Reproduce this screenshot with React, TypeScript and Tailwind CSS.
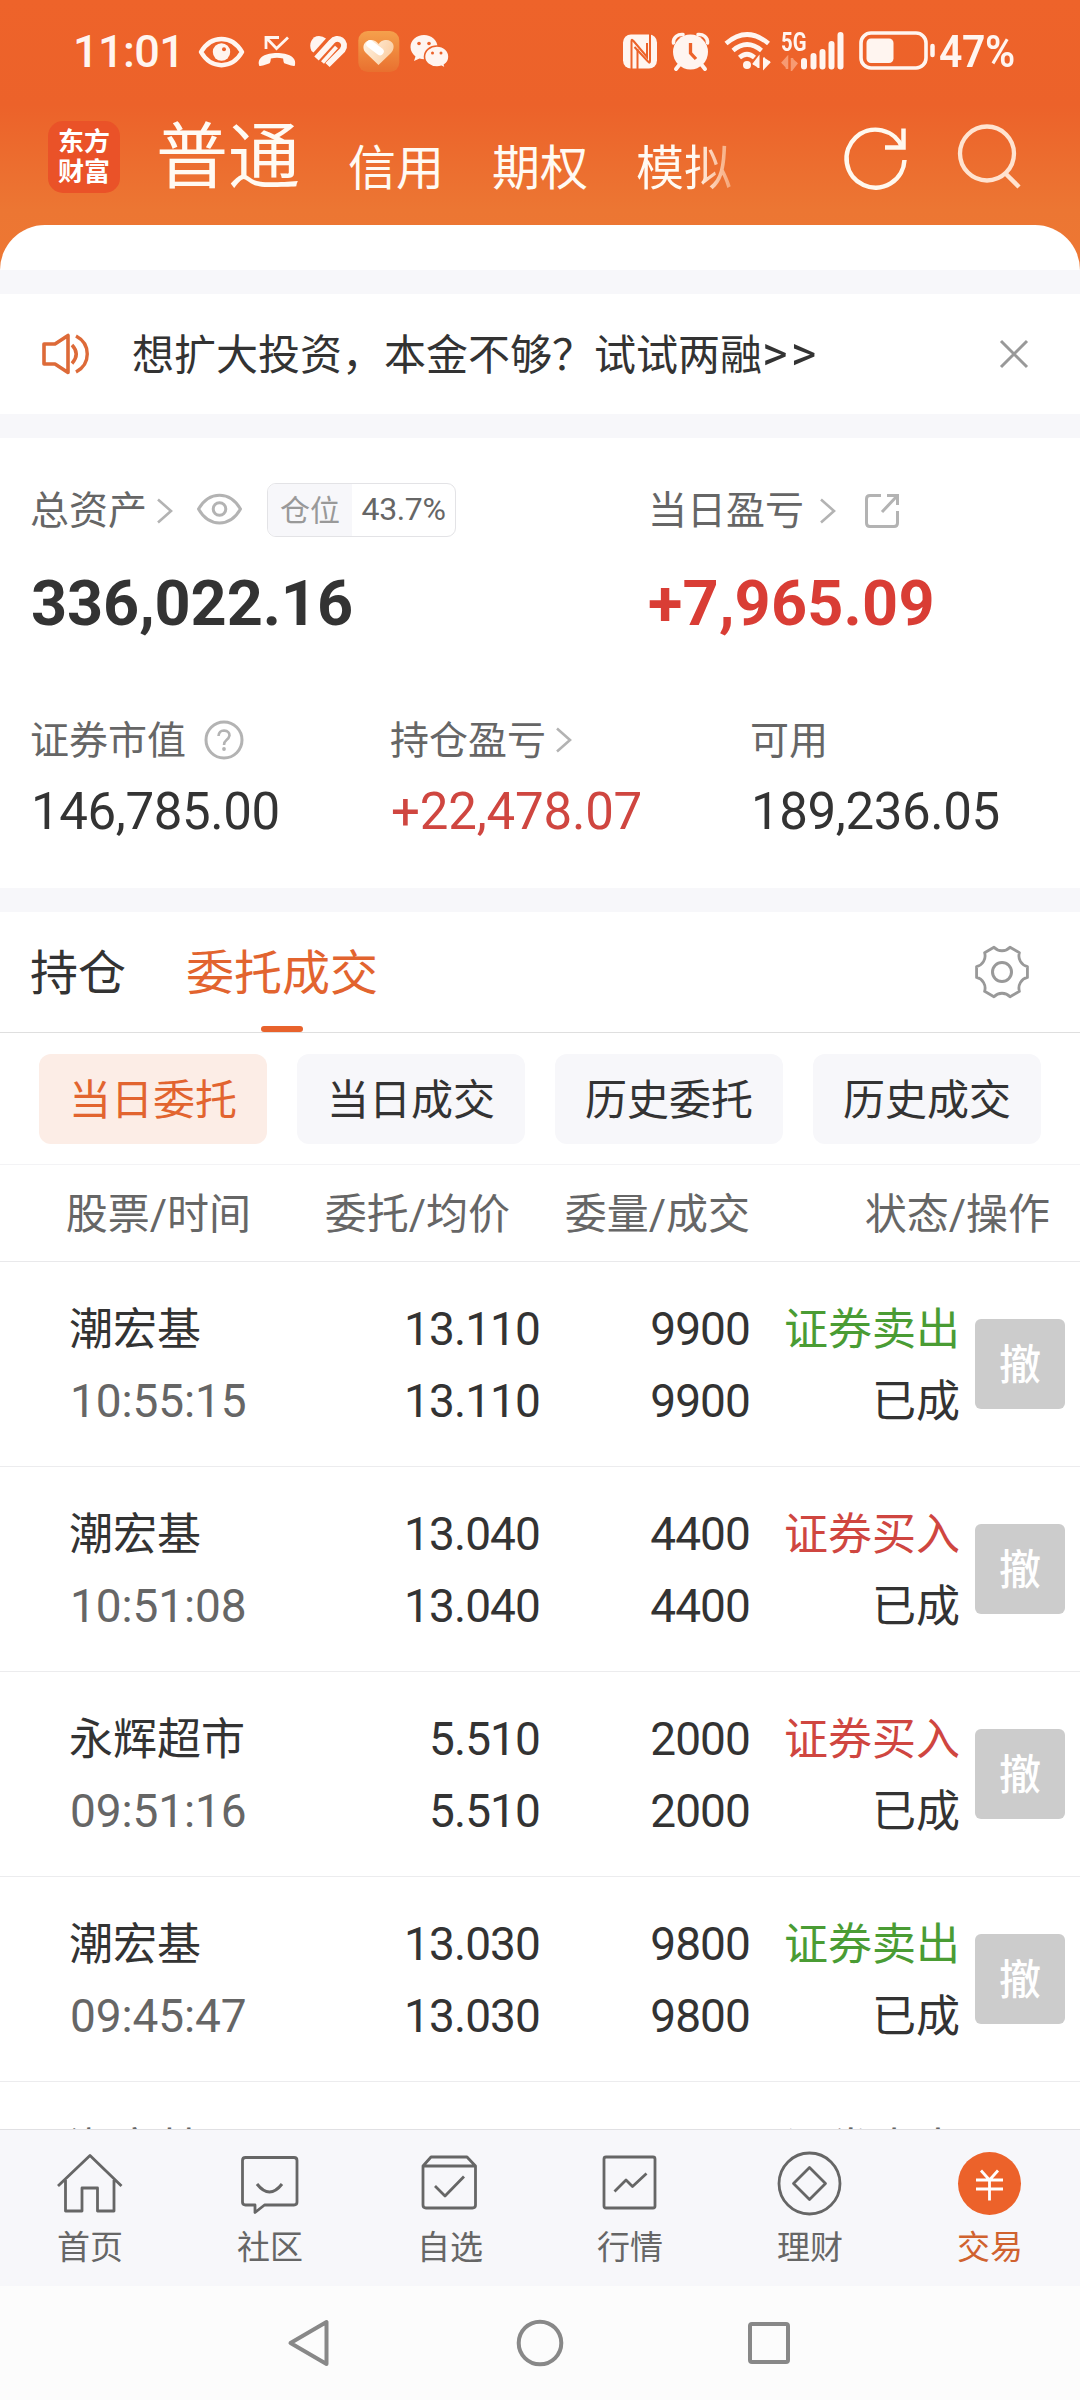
import React from 'react';

type ArtProps = { box: string; w: number; h: number; className?: string; children: React.ReactNode };

function Art({ box, w, h, className = '', children }: ArtProps) {
  return (
    <svg viewBox={box} width={w} height={h} fill="none" className={`block shrink-0 ${className}`}>
      {children}
    </svg>
  );
}

const WARM = '#fff5f0';

function StatusBar() {
  return (
    <div className="flex h-[102px] items-center text-[#fff5f0]">
      <span className="ml-[73px] w-[118px] pt-px text-[45px] leading-[50px] font-medium tracking-[-0.6px] whitespace-nowrap">11:01</span>
      <Art box="198 30 48 42" w={48} h={42} className="ml-[7px]">
        <path d="M201 52C211 34.500 232 34.500 242 52C232 69.500 211 69.500 201 52Z" stroke={WARM} strokeWidth="4.500" strokeLinejoin="round" />
        <circle cx="221.500" cy="52" r="8.700" fill={WARM} />
        <circle cx="224" cy="49.300" r="2" fill="#ec622a" />
      </Art>
      <Art box="256 30 42 42" w={42} h={42} className="ml-[10px]">
        <path d="M266 49V37.500H279M266 37.500L276.500 48.500L288 37.500" stroke={WARM} strokeWidth="2.800" />
        <path d="M259 65C257 57 266 53 277 53C288 53 297 57 295 65C295 66.500 293 66 291 65.500L285 63.500C283 63 283.500 59 283 58.500Q277 57 271 58.500C270.500 59 271 63 269 63.500L263 65.500C261 66 259 66.500 259 65Z" fill={WARM} />
      </Art>
      <Art box="308 30 40 42" w={40} h={42} className="ml-[10px]">
        <path d="M311.500 51C308 44 312 36 319 36Q323 36 326 38.500L313.500 52.500Z" fill={WARM} />
        <path d="M316.500 58.500L331.500 42C337.500 34.500 348 42 342.500 50L327.500 65" stroke={WARM} strokeWidth="6" />
        <path d="M322.500 62.500L336.500 47" stroke={WARM} strokeWidth="4" />
      </Art>
      <Art box="358 30 42 42" w={42} h={42} className="ml-[10px]">
        <defs>
          <linearGradient id="tile" x1="0" y1="0" x2="0" y2="1">
            <stop offset="0" stopColor="#f5a04c" />
            <stop offset="1" stopColor="#e9702f" />
          </linearGradient>
          <linearGradient id="heart" x1="0" y1="0" x2="1" y2="0.400">
            <stop offset="0" stopColor="#fff3e2" />
            <stop offset="1" stopColor="#fbd0a6" />
          </linearGradient>
        </defs>
        <rect x="358.300" y="31" width="41" height="41" rx="9.500" fill="url(#tile)" />
        <path d="M378.500 65L366 53C360 46 366 39 372 40Q376 40.500 378.500 44Q381 40.500 385 40C392 39 397 46 391 53Z" fill="url(#heart)" />
        <path d="M370 44L380 51.500" stroke="#ffffff" strokeWidth="7.500" strokeLinecap="round" />
      </Art>
      <Art box="409 30 42 42" w={42} h={42} className="ml-[9px]">
        <path d="M424 35C416.500 35 410.500 40.300 410.500 47C410.500 51 412.500 54 415.500 56.500L414 61L419.500 58.500Q422 59.300 424 59.300C431.500 59.300 437.500 53.800 437.500 47C437.500 40.300 431.500 35 424 35Z" fill={WARM} />
        <path d="M437 46C430 46 424.500 50.700 424.500 56.700C424.500 62.500 430 67 437 67Q439.500 67 441.500 66.300L445.500 68.500L444.500 64.800C447.500 62.700 449 60 449 56.700C449 50.700 444 46 437 46Z" fill={WARM} stroke="#ec622a" strokeWidth="1.600" />
        <circle cx="419" cy="43.500" r="1.800" fill="#ec622a" />
        <circle cx="429" cy="43.500" r="1.800" fill="#ec622a" />
        <circle cx="432.500" cy="53" r="1.500" fill="#ec622a" />
        <circle cx="441" cy="53" r="1.500" fill="#ec622a" />
      </Art>
      <Art box="622 30 36 42" w={36} h={42} className="ml-[171px]">
        <rect x="623" y="34.500" width="34" height="34" rx="8" fill={WARM} />
        <path d="M631.500 70V41Q631.500 38.500 633.500 41L647 57V43" stroke="#ec622a" strokeWidth="2" />
        <path d="M648.500 33V61Q648.500 64 646.500 61.500L633 47" stroke="#ec622a" strokeWidth="2" transform="translate(1.500 0)" />
        <path d="M637.500 49V70" stroke="#ec622a" strokeWidth="2" />
      </Art>
      <Art box="670 30 42 42" w={42} h={42} className="ml-[12px]">
        <circle cx="690.500" cy="52" r="17.500" fill={WARM} />
        <path d="M673.500 43C673 37 678 34 683 34.500M707.500 43C708 37 703 34 698 34.500" stroke={WARM} strokeWidth="3.500" strokeLinecap="round" />
        <path d="M680 64L676 69M701 64L705 69" stroke={WARM} strokeWidth="4" strokeLinecap="round" />
        <path d="M690.500 43V53L696 59" stroke="#ec622a" strokeWidth="3.300" />
      </Art>
      <Art box="723 30 50 42" w={50} h={42} className="ml-[11px]">
        <path d="M726 43.500Q747 25.500 768.500 43.500M733 50.500Q747 38.500 761.500 50.500" stroke={WARM} strokeWidth="4.600" />
        <path d="M739.500 57.500Q747 51 754.500 57.500" stroke={WARM} strokeWidth="4.600" />
        <circle cx="747" cy="65" r="4" fill={WARM} />
        <path d="M753 64.500L758.500 57.500V68M764 57.500V68L770 61.500" stroke={WARM} strokeWidth="2" fill={WARM} />
      </Art>
      <div className="ml-[8px] flex h-[42px] w-[64px] items-start">
        <div className="flex h-[42px] w-[19px] flex-col">
          <span className="mt-px origin-left scale-x-[0.78] text-[26px] leading-[22px] font-bold">5G</span>
          <Art box="781 55 18 16" w={18} h={16} className="mt-[2px]">
            <path d="M782 63.500L787 58V69M792 58V69L797 62.500" stroke="#f79a72" strokeWidth="2.500" fill="#f79a72" />
          </Art>
        </div>
        <Art box="799 30 46 42" w={46} h={42}>
          <path d="M803 61V66.500M812.500 56V66.500M821.500 52V66.500M830.500 44V66.500M839.500 35V66.500" stroke={WARM} strokeWidth="6" strokeLinecap="round" />
        </Art>
      </div>
      <Art box="857 30 80 42" w={80} h={42} className="ml-[13px]">
        <rect x="860" y="33" width="65" height="35" rx="10" stroke={WARM} strokeWidth="3.600" />
        <rect x="865.500" y="38.500" width="27" height="24.500" rx="4.500" fill={WARM} />
        <path d="M931.500 46V55" stroke={WARM} strokeWidth="4.500" strokeLinecap="round" />
      </Art>
      <span className="ml-px origin-left scale-x-[0.91] pt-px text-[45px] leading-[50px] font-semibold tracking-[-0.5px]">47%</span>
    </div>
  );
}

function AppHeader() {
  return (
    <div className="flex h-[123px] items-start text-[48px] leading-[60px] text-[#fffaf3]">
      <div className="mt-[19px] ml-[48px] flex h-[72px] w-[72px] flex-col items-center justify-center rounded-[15px] bg-[#ea5228] text-[26px] leading-[30px] font-bold text-white">
        <span>东方</span>
        <span>财富</span>
      </div>
      <span className="mt-[14px] ml-[36px] w-[144px] text-[72px] leading-[84px] whitespace-nowrap">普通</span>
      <span className="mt-[37px] ml-[48px] w-[97px] whitespace-nowrap">信用</span>
      <span className="mt-[37px] ml-[47px] w-[97px] whitespace-nowrap">期权</span>
      <span className="mt-[37px] ml-[47px] w-[97px] bg-gradient-to-r from-[#fffaf3] from-60% to-[#f4a06e] bg-clip-text whitespace-nowrap text-transparent">模拟</span>
      <Art box="842 122 68 70" w={68} h={70} className="mt-[20px] ml-[109px]">
        <path d="M904.500 160A29 29 0 1 1 902.500 148" stroke="#fff8ee" strokeWidth="4.500" />
        <path d="M903.500 128.500V147.500H885" stroke="#fff8ee" strokeWidth="4.500" />
      </Art>
      <Art box="955 122 70 70" w={70} h={70} className="mt-[20px] ml-[45px]">
        <circle cx="987" cy="153.500" r="27" stroke="#ffe3d0" strokeWidth="4.300" />
        <path d="M1005.500 173.500L1019 187" stroke="#ffe3d0" strokeWidth="4.500" />
      </Art>
    </div>
  );
}

function Chevron({ className = '' }: { className?: string }) {
  return (
    <Art box="0 0 18 28" w={18} h={28} className={className}>
      <path d="M2 2.500L15 14L2 25.500" stroke="#b3b3b3" strokeWidth="2.600" />
    </Art>
  );
}

function Notice() {
  return (
    <div className="flex h-[120px] items-center bg-white">
      <Art box="40 330 52 48" w={52} h={48} className="ml-[40px]">
        <path d="M44 344H55L68 335.500V372.500L55 364H44Z" stroke="#dd6a38" strokeWidth="3.600" strokeLinejoin="round" />
        <path d="M72 345Q80.500 354 72 363.500M76 336C91 344 91 364 76 372" stroke="#dd6a38" strokeWidth="3.400" />
      </Art>
      <span className="ml-[40px] pt-[2px] text-[42px] leading-[60px] text-[#333333]">
        想扩大投资，本金不够？试试两融<span className="text-[49px] tracking-[3px]">&gt;&gt;</span>
      </span>
      <Art box="0 0 30 30" w={30} h={30} className="mr-[51px] ml-auto">
        <path d="M2 2L28 28M28 2L2 28" stroke="#999999" strokeWidth="3" />
      </Art>
    </div>
  );
}

function Assets() {
  return (
    <div className="h-[450px] bg-white pt-[42px] pl-[31px] text-[39px] text-[#666666]">
      <div className="grid h-[60px] grid-cols-[617px_1fr] items-center">
        <div className="flex items-center">
          <span className="-ml-px pt-px leading-[60px]">总资产</span>
          <Chevron className="ml-[9px]" />
          <Art box="195 490 50 36" w={50} h={36} className="ml-[21px]">
            <path d="M198.500 506C209 487.500 230 487.500 240.500 506C230 524.500 209 524.500 198.500 506Z" stroke="#b3b3b3" strokeWidth="3" strokeLinejoin="round" />
            <circle cx="219.500" cy="506" r="6.300" stroke="#b3b3b3" strokeWidth="3" />
          </Art>
          <div className="-mt-[2px] ml-[22px] flex h-[54px] w-[189px] overflow-hidden rounded-[9px] border border-[#e3e3e6] text-[30px] leading-[53px]">
            <span className="w-[84px] bg-[#f7f7fa] text-center text-[#999999]">仓位</span>
            <span className="grow text-center text-[32px] leading-[51px] tracking-[-0.4px]">43.7%</span>
          </div>
        </div>
        <div className="flex items-center">
          <span className="pt-px leading-[60px]">当日盈亏</span>
          <Chevron className="ml-[15px]" />
          <Art box="863 491 38 38" w={38} h={38} className="ml-[26px]">
            <path d="M881 494.500H870Q866.500 494.500 866.500 498V522Q866.500 525.500 870 525.500H894Q897.500 525.500 897.500 522V510" stroke="#b3b3b3" strokeWidth="3" />
            <path d="M887 494.500H897.500V504M897 495L882 511" stroke="#b3b3b3" strokeWidth="3" />
          </Art>
        </div>
      </div>
      <div className="mt-[28px] grid h-[72px] grid-cols-[617px_1fr] items-center text-[63px] leading-[72px] font-bold">
        <span className="tracking-[-0.1px] text-[#333333]">336,022.16</span>
        <span className="tracking-[0.2px] text-[#d93d35]">+7,965.09</span>
      </div>
      <div className="mt-[75px] grid h-[48px] grid-cols-[360px_360px_1fr] items-center leading-[48px]">
        <div className="flex items-center">
          <span className="-ml-px pt-[2px]">证券市值</span>
          <Art box="203 719 42 42" w={42} h={42} className="ml-[17px]">
            <circle cx="224" cy="740" r="18" stroke="#b3b3b3" strokeWidth="3" />
            <path d="M218.500 736Q219 730.500 224 730.500Q229.500 731 229.500 735.500Q229 738 226.500 740Q224 742 224 745" stroke="#b3b3b3" strokeWidth="2.600" />
            <circle cx="224" cy="749" r="1.900" fill="#b3b3b3" />
          </Art>
        </div>
        <div className="flex items-center">
          <span className="-ml-px pt-[2px]">持仓盈亏</span>
          <Chevron className="ml-[9px]" />
        </div>
        <span className="-ml-px pt-[2px]">可用</span>
      </div>
      <div className="mt-[19px] grid h-[60px] grid-cols-[360px_360px_1fr] items-center text-[51px] leading-[60px] tracking-[-0.4px] text-[#333333]">
        <span>146,785.00</span>
        <span className="tracking-[-0.2px] text-[#cf4640]">+22,478.07</span>
        <span>189,236.05</span>
      </div>
    </div>
  );
}

const GEAR = (() => {
  const at = (deg: number) => {
    const a = (deg * Math.PI) / 180;
    return `${(26 * Math.cos(a)).toFixed(2)} ${(26 * Math.sin(a)).toFixed(2)}`;
  };
  let d = `M${at(-12)}`;
  for (let k = 0; k < 6; k++) {
    d += `L${at(k * 60 + 12)}A11 11 0 0 0 ${at(k * 60 + 48)}`;
  }
  return `${d}Z`;
})();

function MainTabs() {
  return (
    <div className="flex h-[121px] items-start border-b border-[#dfdfdf] bg-white text-[48px] leading-[124px] text-[#333333]">
      <span className="ml-[30px] w-[96px]">持仓</span>
      <div className="ml-[60px] flex w-[192px] flex-col items-center">
        <span className="h-[114px] text-[#e2642f]">委托成交</span>
        <span className="h-[6px] w-[42px] rounded-[3px] bg-[#e8622c]" />
      </div>
      <Art box="-29 -29 58 58" w={58} h={58} className="mt-[31px] mr-[49px] ml-auto">
        <path d={GEAR} stroke="#999999" strokeWidth="2.800" strokeLinejoin="round" />
        <circle r="9.500" stroke="#999999" strokeWidth="3" />
      </Art>
    </div>
  );
}

const FILTERS = ['当日委托', '当日成交', '历史委托', '历史成交'];

function Filters() {
  return (
    <div className="flex h-[132px] gap-[30px] border-b border-[#f3f3f5] bg-white pt-[21px] pl-[39px] text-[42px] leading-[93px]">
      {FILTERS.map((name, i) => (
        <button
          key={name}
          className={
            i === 0
              ? 'h-[90px] w-[228px] rounded-[12px] bg-[#fcede6] text-[#e2642f]'
              : 'h-[90px] w-[228px] rounded-[12px] bg-[#f7f7fa] text-[#333333]'
          }
        >
          {name}
        </button>
      ))}
    </div>
  );
}

type Order = { name: string; time: string; price: string; volume: string; side: 'buy' | 'sell' };

const ORDERS: Order[] = [
  { name: '潮宏基', time: '10:55:15', price: '13.110', volume: '9900', side: 'sell' },
  { name: '潮宏基', time: '10:51:08', price: '13.040', volume: '4400', side: 'buy' },
  { name: '永辉超市', time: '09:51:16', price: '5.510', volume: '2000', side: 'buy' },
  { name: '潮宏基', time: '09:45:47', price: '13.030', volume: '9800', side: 'sell' },
];

function OrderRow({ order }: { order: Order }) {
  return (
    <div className="grid h-[205px] shrink-0 grid-cols-[251px_221px_209px_210px_90px] content-start border-b border-[#ececee] pt-[31px] pl-[69px] text-[44px] leading-[72px] text-[#333333]">
      <div className="flex flex-col">
        <span className="pt-px">{order.name}</span>
        <span className="-mt-px pl-px text-[46px] tracking-[-0.1px] text-[#666666]">{order.time}</span>
      </div>
      <div className="flex flex-col pr-px text-right text-[46px] tracking-[-0.9px]">
        <span>{order.price}</span>
        <span>{order.price}</span>
      </div>
      <div className="flex flex-col text-right text-[46px] tracking-[-0.9px]">
        <span>{order.volume}</span>
        <span>{order.volume}</span>
      </div>
      <div className="flex flex-col pt-px text-right">
        <span className={order.side === 'sell' ? 'text-[#4a9c34]' : 'text-[#cf4640]'}>
          {order.side === 'sell' ? '证券卖出' : '证券买入'}
        </span>
        <span>已成</span>
      </div>
      <button className="mt-[26px] ml-[15px] h-[90px] w-[90px] rounded-[6px] bg-[#cccccc] text-[42px] leading-[94px] font-medium text-white">撤</button>
    </div>
  );
}

function Orders() {
  return (
    <div className="flex h-[964px] flex-col overflow-hidden bg-white">
      <div className="grid h-[97px] shrink-0 grid-cols-[251px_259px_240px_300px] border-b border-[#e9e9eb] text-right text-[42px] leading-[100px] text-[#666666]">
        <span>股票/时间</span>
        <span>委托/均价</span>
        <span>委量/成交</span>
        <span>状态/操作</span>
      </div>
      {ORDERS.map((order, i) => (
        <OrderRow key={i} order={order} />
      ))}
      <div className="flex shrink-0 justify-between pt-[32px] pr-[120px] pl-[69px] text-[44px] leading-[72px] text-[#666666]">
        <span>潮宏基</span>
        <span>证券卖出</span>
      </div>
    </div>
  );
}

const NAV: { label: string; box: string; art: React.ReactNode }[] = [
  {
    label: '首页',
    box: '54 2148 72 72',
    art: <path d="M58 2186L90 2155.500L121.500 2186M65.500 2180V2211H82V2188H97.500V2211H114V2180" />,
  },
  {
    label: '社区',
    box: '234 2148 72 72',
    art: (
      <>
        <path d="M245.500 2157.500H294Q297 2157.500 297 2160.500V2202Q297 2205 294 2205H264.500L255 2212.500V2205H245.500Q242.500 2205 242.500 2202V2160.500Q242.500 2157.500 245.500 2157.500Z" />
        <path d="M257 2184Q269.500 2200 282 2184" strokeWidth="3" />
      </>
    ),
  },
  {
    label: '自选',
    box: '414 2148 72 72',
    art: (
      <>
        <path d="M423 2166L431 2157H467L475.500 2166V2205Q475.500 2208 472.500 2208H426Q423 2208 423 2205ZM423 2166H475.500" />
        <path d="M435 2186L445 2196L464 2176.500" />
      </>
    ),
  },
  {
    label: '行情',
    box: '594 2148 72 72',
    art: (
      <>
        <rect x="604" y="2157" width="51" height="51" rx="2" />
        <path d="M614.500 2191.500L626 2180L632.500 2186.500L646.500 2173.500" />
      </>
    ),
  },
  {
    label: '理财',
    box: '774 2148 72 72',
    art: (
      <>
        <circle cx="809.500" cy="2183.500" r="30.500" />
        <path d="M809.500 2167.500L825.500 2183.500L809.500 2199.500L793.500 2183.500Z" />
      </>
    ),
  },
  {
    label: '交易',
    box: '954 2148 72 72',
    art: (
      <>
        <circle cx="989.500" cy="2183.500" r="31.500" fill="#ec622a" stroke="none" />
        <path d="M981 2170.500L989.500 2180L998 2170.500M976 2180H1003M976 2189H1003M989.500 2180V2200.500" stroke="#ffffff" />
      </>
    ),
  },
];

function BottomNav() {
  return (
    <nav className="grid h-[157px] grid-cols-6 border-t border-[#e0e0e3] bg-[#f7f7fa]">
      {NAV.map((item) => (
        <div key={item.label} className="flex flex-col items-center pt-[18px]">
          <Art box={item.box} w={72} h={72}>
            <g stroke="#666666" strokeWidth="2.800" strokeLinejoin="round">{item.art}</g>
          </Art>
          <span className={item.label === '交易' ? 'mt-[8px] text-[33px] leading-[40px] text-[#d0622f]' : 'mt-[8px] text-[33px] leading-[40px] text-[#666666]'}>
            {item.label}
          </span>
        </div>
      ))}
    </nav>
  );
}

function SystemBar() {
  return (
    <div className="flex h-[114px] items-center bg-[#fcfcfc]">
      <Art box="285 2317 48 52" w={48} h={52} className="ml-[285px]">
        <path d="M326.500 2322V2364L290.500 2343Z" stroke="#888888" strokeWidth="4" strokeLinejoin="round" />
      </Art>
      <Art box="514 2317 52 52" w={52} h={52} className="ml-[181px]">
        <circle cx="540" cy="2343" r="21.300" stroke="#888888" strokeWidth="4" />
      </Art>
      <Art box="743 2317 52 52" w={52} h={52} className="ml-[177px]">
        <rect x="750" y="2324" width="38" height="38" rx="2" stroke="#888888" strokeWidth="4" />
      </Art>
    </div>
  );
}

export default function App() {
  return (
    <div
      lang="zh-CN"
      className="flex h-[2400px] w-[1080px] flex-col overflow-hidden bg-[#f7f7fa] font-['Roboto','Noto_Sans_CJK_SC',sans-serif]"
    >
      <div className="h-[270px] bg-[linear-gradient(#ee632a_0px,#ec622a_105px,#ec7633_210px,#ee7733_270px)]">
        <StatusBar />
        <AppHeader />
        <div className="h-[45px] rounded-t-[48px] bg-white" />
      </div>
      <div className="mt-[24px]">
        <Notice />
      </div>
      <div className="mt-[24px]">
        <Assets />
      </div>
      <div className="mt-[24px]">
        <MainTabs />
        <Filters />
        <Orders />
      </div>
      <BottomNav />
      <SystemBar />
    </div>
  );
}
